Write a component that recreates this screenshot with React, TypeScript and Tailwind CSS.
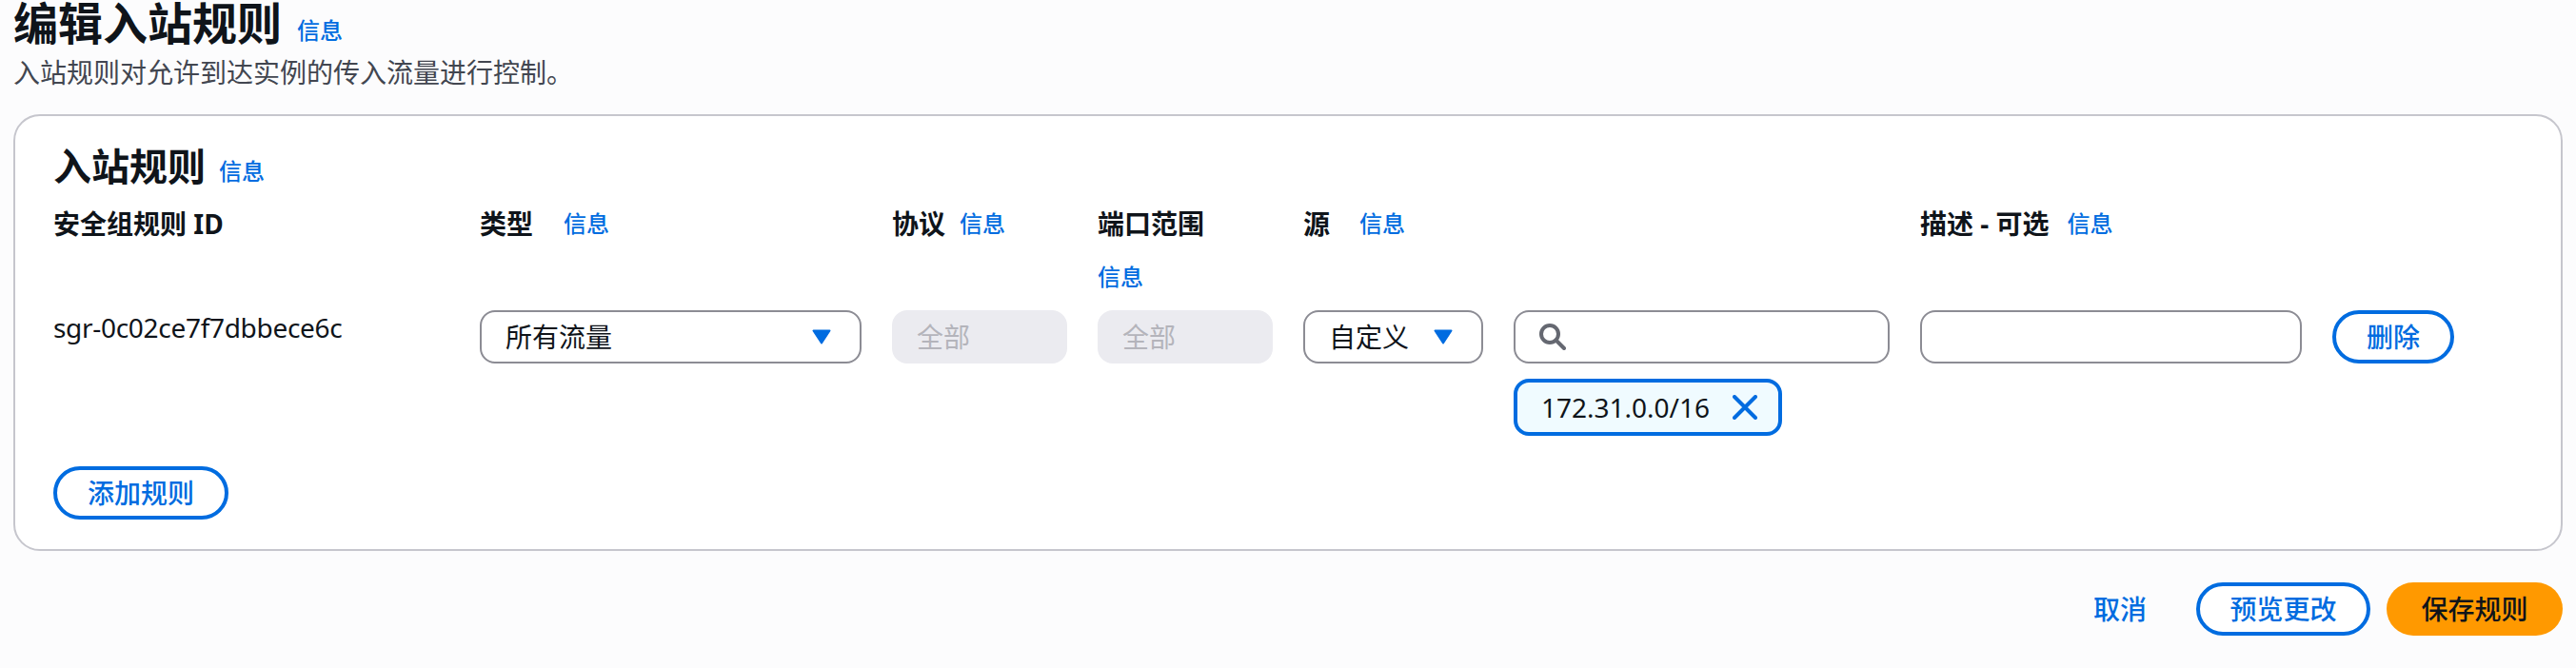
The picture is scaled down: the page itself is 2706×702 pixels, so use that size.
const fontStack = 'font-["Noto_Sans","Noto_Sans_CJK_SC",sans-serif]'

const Info = ({ className = '' }: { className?: string }) => (
    <a className={`text-[24px] leading-[28px] font-medium text-[#006ce0] ${className}`}>信息</a>
)

const Label = ({ text, info, gap = 'ml-[15px]' }: { text: string; info?: boolean; gap?: string }) => (
    <div className="flex items-center h-[36px]">
        <span className="text-[28px] leading-[36px] font-bold text-[#0f141a] whitespace-pre">{text}</span>
        {info && <Info className={gap} />}
    </div>
)

const Caret = () => (
    <svg width="20" height="16" viewBox="0 0 20 16" className="shrink-0">
        <path d="M1.5 1.5h17l-8.5 13z" fill="#006ce0" stroke="#006ce0" strokeWidth="2" strokeLinejoin="round" />
    </svg>
)

const Select = ({ text, className = '' }: { text: string; className?: string }) => (
    <div className={`flex items-center justify-between h-[56px] border-2 border-[#8c8c94] rounded-[16px] bg-white pl-[25px] pr-[30px] ${className}`}>
        <span className="text-[28px] text-[#0f141a]">{text}</span>
        <Caret />
    </div>
)

const Disabled = () => (
    <div className="flex items-center h-[56px] rounded-[16px] bg-[#ebebf0] pl-[26px] text-[28px] text-[#b4b4bb]">全部</div>
)

const Button = ({ text, className = '' }: { text: string; className?: string }) => (
    <button className={`flex items-center justify-center h-[56px] rounded-full border-4 border-[#006ce0] bg-white text-[28px] font-medium text-[#006ce0] ${className}`}>
        {text}
    </button>
)

export default function App() {
    return (
        <div className={`${fontStack} w-[2706px] h-[702px] bg-[#fcfcfd] px-[14px] overflow-hidden`}>
            <div className="flex items-start h-[48px]">
                <h1 className="text-[47px] leading-[48px] font-bold text-[#0f141a]">编辑入站规则</h1>
                <Info className="ml-[16px] mt-[18px]" />
            </div>
            <p className="mt-[12px] text-[28px] leading-[32px] text-[#424650]">入站规则对允许到达实例的传入流量进行控制。</p>

            <div className="mt-[28px] h-[459px] border-2 border-[#c6c6cd] rounded-[28px] bg-white pl-[40px] pt-[34px]">
                <div className="flex items-end h-[38px]">
                    <h2 className="text-[40px] leading-[38px] font-bold text-[#0f141a]">入站规则</h2>
                    <Info className="ml-[14px]" />
                </div>
                <div className="mt-[23px] grid grid-cols-[416px_401px_184px_184px_189px_395px_401px_128px] gap-x-[32px]">
                    <Label text="安全组规则 ID" />
                    <Label text="类型" info gap="ml-[32px]" />
                    <Label text="协议" info />
                    <div>
                        <Label text="端口范围" />
                        <Info className="block mt-[24px]" />
                    </div>
                    <Label text="源" info gap="ml-[31px]" />
                    <div />
                    <Label text="描述 - 可选" info gap="ml-[19px]" />
                    <div />

                    <div className="mt-[21px] text-[28px] leading-[36px] tracking-[-0.3px] text-[#0f141a] h-fit">sgr-0c02ce7f7dbbece6c</div>
                    <Select text="所有流量" className="mt-[21px]" />
                    <div className="mt-[21px]"><Disabled /></div>
                    <div className="mt-[21px]"><Disabled /></div>
                    <Select text="自定义" className="mt-[21px]" />
                    <div className="mt-[21px]">
                        <div className="flex items-center h-[56px] border-2 border-[#8c8c94] rounded-[16px] bg-white pl-[25px]">
                            <svg width="28" height="28" viewBox="0 0 28 28" fill="none" stroke="#656871" strokeWidth="4">
                                <circle cx="11" cy="11" r="9" />
                                <path d="M17.5 17.5l8.5 8.5" strokeLinecap="round" />
                            </svg>
                        </div>
                        <div className="mt-[16px] flex items-center w-[282px] h-[60px] border-4 border-[#006ce0] rounded-[16px] bg-[#f0fbff] pl-[25px]">
                            <span className="text-[28px] text-[#0f141a]">172.31.0.0/16</span>
                            <svg width="26" height="26" viewBox="0 0 26 26" className="ml-[24px]" fill="none" stroke="#006ce0" strokeWidth="4" strokeLinecap="round">
                                <path d="M2 2l22 22M24 2L2 24" />
                            </svg>
                        </div>
                    </div>
                    <div className="mt-[21px] h-[56px] border-2 border-[#8c8c94] rounded-[16px] bg-white" />
                    <Button text="删除" className="mt-[21px] w-[128px]" />
                </div>
                <Button text="添加规则" className="mt-[32px] w-[184px]" />
            </div>

            <div className="mt-[33px] flex items-center justify-end">
                <a className="text-[28px] font-medium text-[#006ce0]">取消</a>
                <Button text="预览更改" className="ml-[52px] w-[183px] bg-transparent" />
                <button className="ml-[17px] w-[185px] h-[56px] rounded-full bg-[#ff9900] text-[28px] font-medium text-[#0f141a]">保存规则</button>
            </div>
        </div>
    )
}
